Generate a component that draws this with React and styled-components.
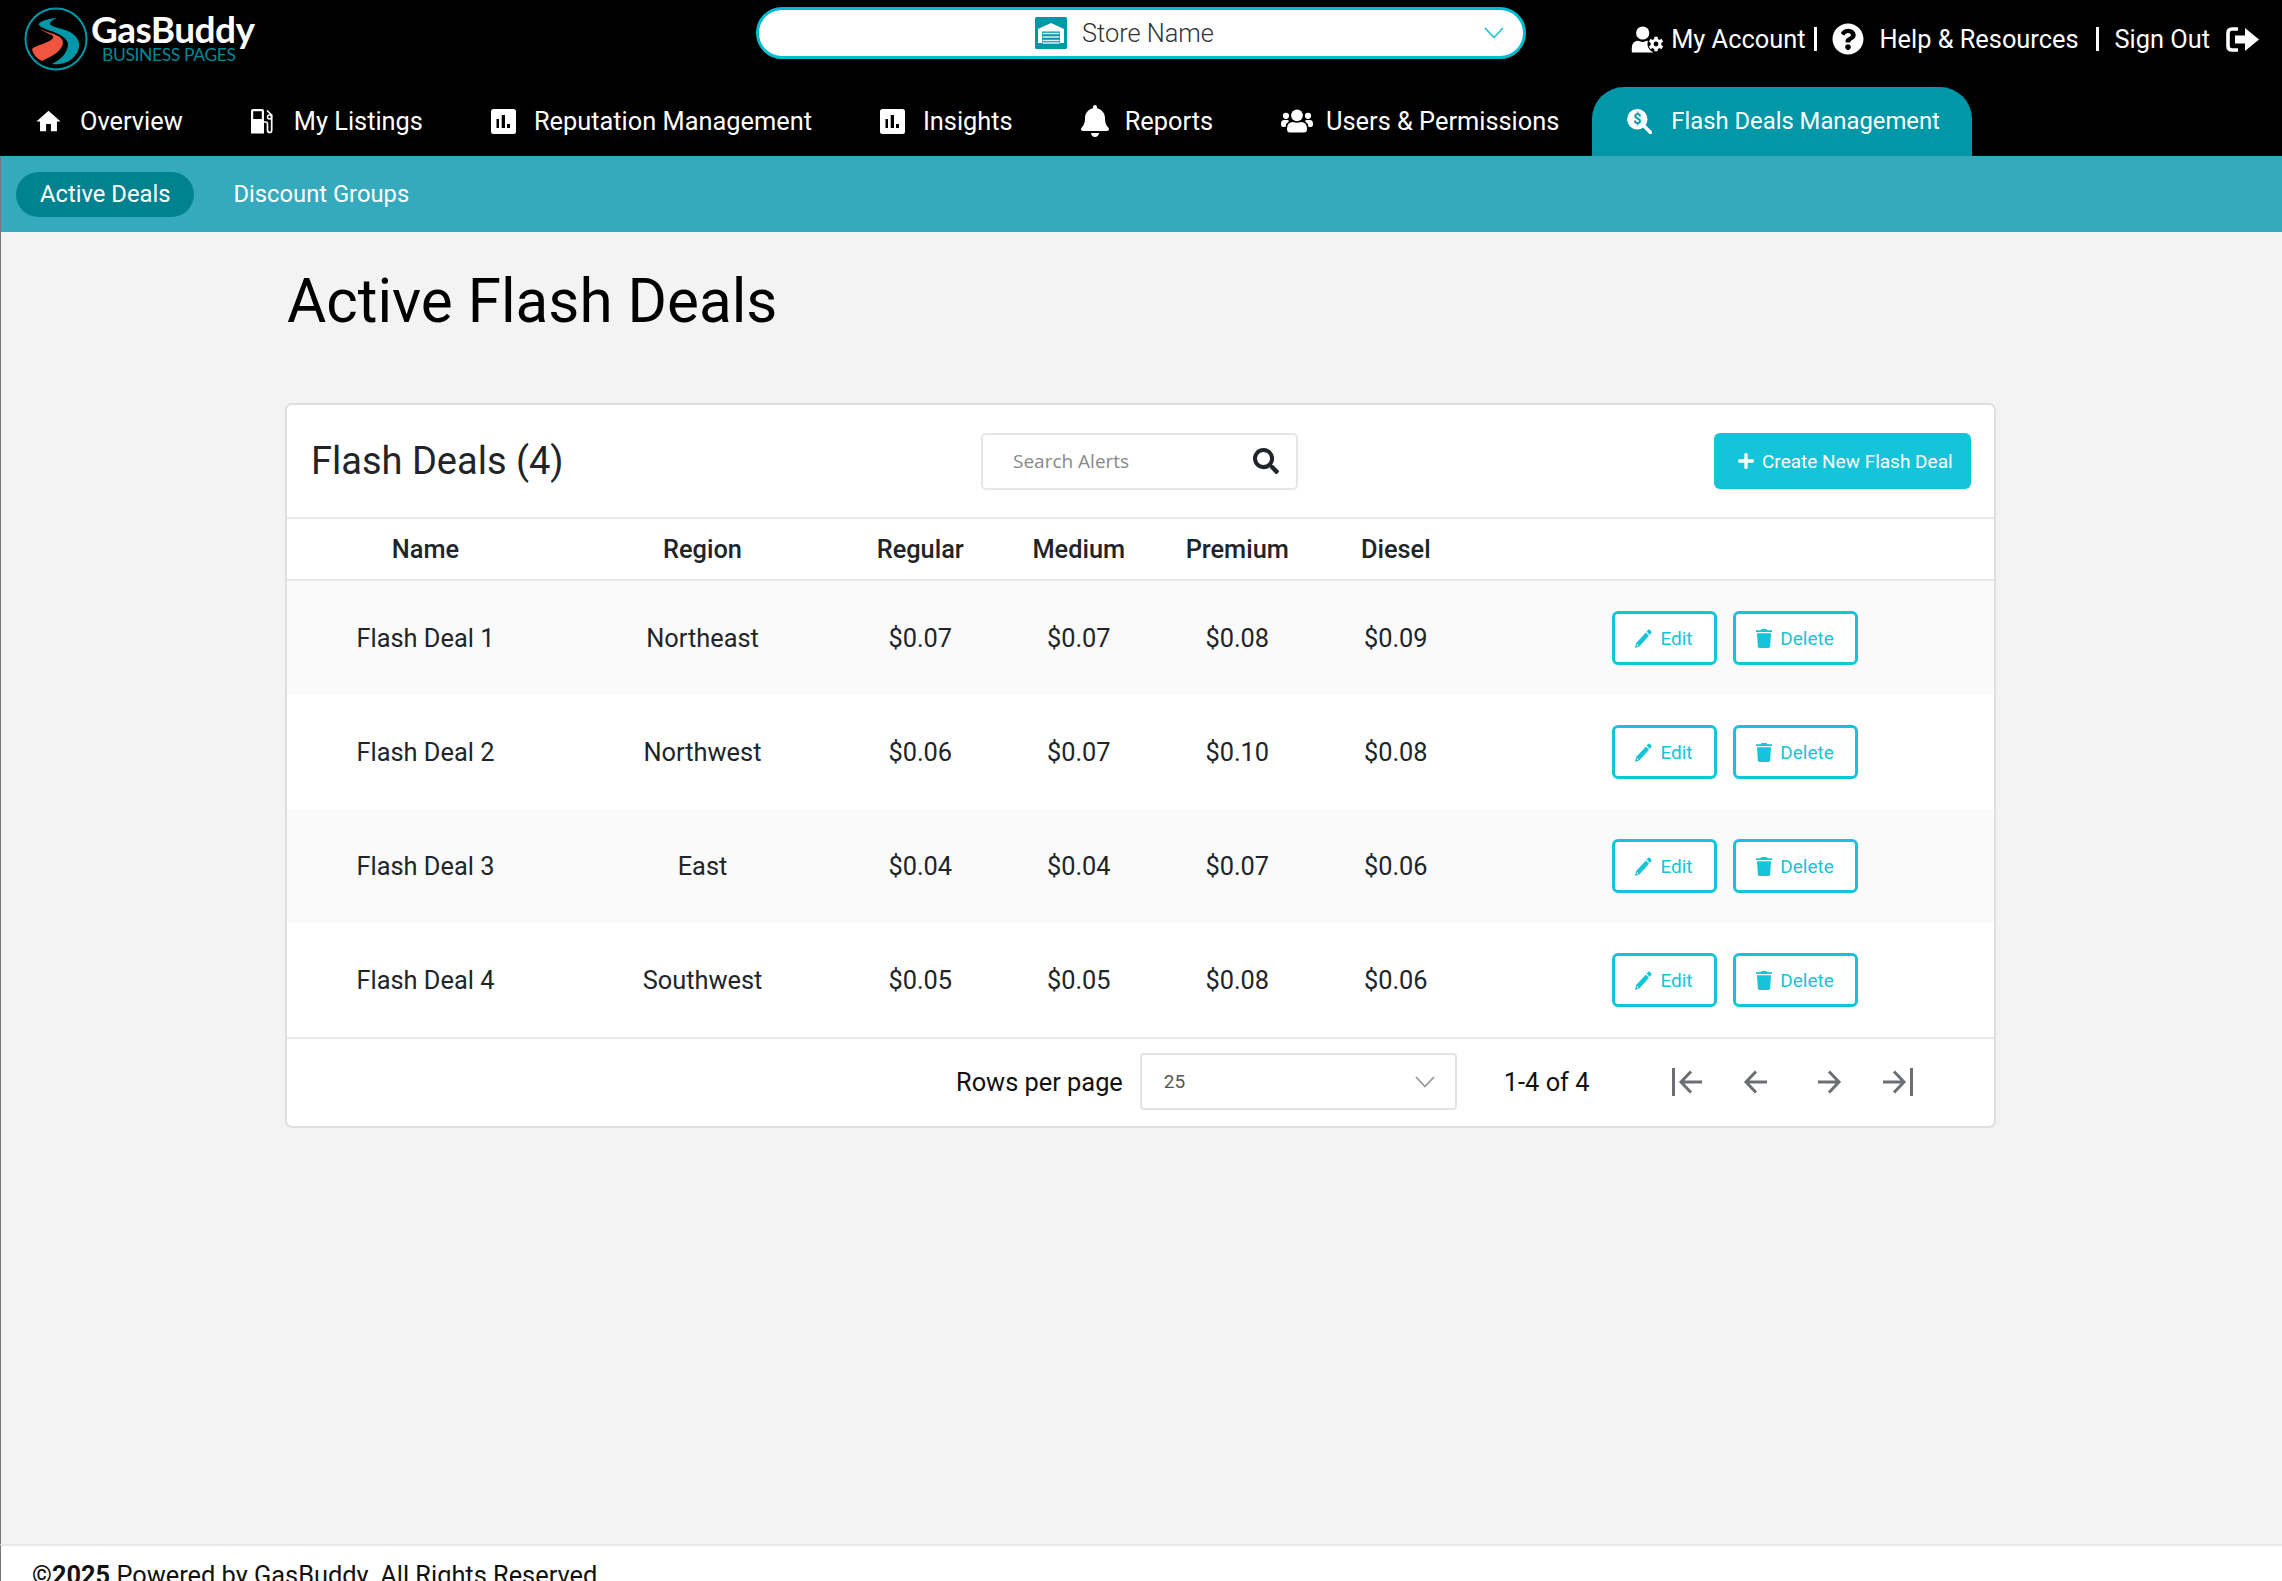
import React from "react";
import styled, { createGlobalStyle } from "styled-components";
import { FaQuestionCircle, FaSearch, FaPlus, FaBell } from "react-icons/fa";
import { MdHome } from "react-icons/md";

const navItems = [
  { label: "Overview", icon: "home", size: 24, gap: 20 },
  { label: "My Listings", icon: "pump", size: 22, gap: 21 },
  { label: "Reputation Management", icon: "chart", size: 25, gap: 18 },
  { label: "Insights", icon: "chart", size: 25, gap: 18 },
  { label: "Reports", icon: "bell", size: 28, gap: 16 },
  { label: "Users & Permissions", icon: "users", size: 32, gap: 13 },
];

const deals = [
  { name: "Flash Deal 1", region: "Northeast", prices: ["$0.07", "$0.07", "$0.08", "$0.09"] },
  { name: "Flash Deal 2", region: "Northwest", prices: ["$0.06", "$0.07", "$0.10", "$0.08"] },
  { name: "Flash Deal 3", region: "East", prices: ["$0.04", "$0.04", "$0.07", "$0.06"] },
  { name: "Flash Deal 4", region: "Southwest", prices: ["$0.05", "$0.05", "$0.08", "$0.06"] },
];

const Logo = () => (
  <svg width="240" height="70" viewBox="0 0 240 70">
    <circle cx="32" cy="34" r="30.5" fill="none" stroke="#0097a9" strokeWidth="2" />
    <path
      d="M33 13 C18 14 12 19 16 21 C22 26 42 28 44 39 C44 48 36 55 28 59 C36 60 44 58 50 52 C58 43 57 33 46 27 C36 22 15 21 33 13 Z"
      fill="#0097a9"
    />
    <path
      d="M13 22 C21 29 31 29 29 33 C26 38 12 40 8 44 C9 49 13 54 18 56 C29 51 39 45 39 37 C38 28 19 28 13 22 Z"
      fill="#f0553f"
    />
    <text x="67" y="38" fill="#fff" fontFamily="Lato" fontWeight="700" fontSize="37" textLength="164">
      GasBuddy
    </text>
    <text x="78" y="56" fill="#008796" fontFamily="Lato" fontSize="17.5" textLength="134">
      BUSINESS PAGES
    </text>
  </svg>
);

const PumpIcon = () => (
  <svg width="22" height="25" viewBox="0 0 22 25" fill="none">
    <path fillRule="evenodd" d="M2 0H11Q13 0 13 2V24.5H0V2Q0 0 2 0ZM2.2 2.2V10H10.8V2.2Z" fill="#fff" />
    <path d="M13 13H15Q16.5 13 16.5 15V21Q16.5 23.5 18.5 23.5Q20.7 23.5 20.7 21V6L16 1.5" stroke="#fff" strokeWidth="1.7" />
    <circle cx="18.5" cy="8" r="2" stroke="#fff" strokeWidth="1.5" />
  </svg>
);

const ChartIcon = () => (
  <svg width="25" height="25" viewBox="0 0 25 25">
    <rect width="25" height="25" rx="2.5" fill="#fff" />
    <path d="M5.5 10H8V19H5.5ZM10.7 6H14V19H10.7ZM16 15H19V19H16Z" fill="#000" />
  </svg>
);

const UsersIcon = () => (
  <svg width="32" height="24" viewBox="0 0 32 24" fill="#fff">
    <circle cx="16" cy="6.3" r="5.9" />
    <circle cx="5" cy="6.8" r="3.1" />
    <circle cx="27" cy="6.8" r="3.1" />
    <path d="M6 20Q6 13 12 13Q16 14.500 20 13Q26 13 26 20Q26 23.500 23 23.500H9Q6 23.500 6 20Z" />
    <path d="M0 15Q0 11 3 11H6.500Q8 11.500 8 12.200Q5 14 4.500 18H2Q0 18 0 15ZM32 15Q32 11 29 11H25.500Q24 11.500 24 12.200Q27 14 27.500 18H30Q32 18 32 15Z" />
  </svg>
);

const UserGearIcon = () => (
  <svg width="33" height="27" viewBox="0 0 33 27">
    <circle cx="11.7" cy="7" r="6.6" fill="#fff" />
    <path d="M.8 26.500V22Q1 15 7 14.800Q12 17 16 14.800L22 16V26.500Z" fill="#fff" />
    <circle cx="25" cy="18" r="8.600" fill="#000" />
    <circle cx="25" cy="18" r="3.900" fill="none" stroke="#fff" strokeWidth="3" />
    <path
      d="M25 13.500V10.700M25 22.500V25.300M21.100 15.700L18.700 14.300M28.900 20.300L31.300 21.700M28.900 15.700L31.300 14.300M21.100 20.300L18.700 21.700"
      stroke="#fff"
      strokeWidth="3.400"
    />
  </svg>
);

const DollarSearchIcon = () => (
  <svg width="25" height="25" viewBox="0 0 25 25">
    <path d="M15 15L23.500 23.500" stroke="#fff" strokeWidth="3.400" strokeLinecap="round" />
    <circle cx="10.300" cy="10.300" r="10.200" fill="#fff" />
    <text x="10.300" y="15.300" textAnchor="middle" fill="#0097a9" fontSize="14" fontWeight="700">
      $
    </text>
  </svg>
);

const StoreIcon = () => (
  <svg width="32" height="32" viewBox="0 0 32 32">
    <rect width="32" height="32" rx="1.5" fill="#0097a9" />
    <path d="M3 26V12L16 6L29 12V26H25V14.5H7V26Z" fill="#fff" />
    <path d="M7.5 16.5H24.5M7.5 20H24.5M7.5 23.5H24.5M7.5 26H24.5" stroke="#d5eff2" strokeWidth="1.7" />
  </svg>
);

const SignOutIcon = () => (
  <svg width="33" height="25" viewBox="0 0 33 25">
    <path d="M12 2H6Q2 2 2 6V19Q2 23 6 23H12" fill="none" stroke="#fff" strokeWidth="3.6" />
    <path d="M9 8.5H19V1L33 12.5L19 24V16.5H9Z" fill="#fff" />
  </svg>
);

const Chevron = ({ color }) => (
  <svg width="20" height="12" viewBox="0 0 20 12">
    <path d="M1 1L10 10.5L19 1" fill="none" stroke={color} strokeWidth="1.8" />
  </svg>
);

const PencilIcon = () => (
  <svg width="17" height="19" viewBox="0 0 17 19" fill="#14c4d8">
    <path d="M11.7 2.5L13.3 .8Q14.2 0 15.1 1L16.3 2.4Q17 3.3 16.2 4.2L14.7 5.9Z" />
    <path fillRule="evenodd" d="M10.9 3.4L14 6.8L4.6 17.2L0 19L1.2 13.9ZM2.2 14.9L1.8 17L3.6 16.3Z" />
  </svg>
);

const TrashIcon = () => (
  <svg width="16" height="19" viewBox="0 0 16 19" fill="#14c4d8">
    <path d="M0 1.3H4.5L5.5 0H10.5L11.5 1.3H16V3H0Z" />
    <path d="M1 4.2H15L14.2 17.2Q14 19 12.5 19H3.5Q2 19 1.8 17.2Z" />
  </svg>
);

const PageArrow = ({ right, bar }) => (
  <ArrowSvg
    width={bar ? 30 : 35}
    height="28"
    viewBox={bar ? "0 0 30 28" : "2 0 35 28"}
    $flip={right}
  >
    <path d="M30 14H9.5M19 3.5L9 14L19 24.5" />
    {bar && <path d="M1.5 0V28" />}
  </ArrowSvg>
);

const icons = {
  home: <MdHome size={29} />,
  pump: <PumpIcon />,
  chart: <ChartIcon />,
  bell: <FaBell size={32} />,
  users: <UsersIcon />,
};

export default function App() {
  return (
    <Page>
      <GlobalStyle />
      <Header>
        <TopBar>
          <Logo />
          <StoreSelect>
            <StoreIcon />
            <StoreName>Store Name</StoreName>
            <Chevron color="#26c6da" />
          </StoreSelect>
          <AccountLinks>
            <UserGearIcon />
            <AccountText $left={7} $right={9}>My Account</AccountText>
            <Divider />
            <HelpIcon size={32} />
            <AccountText $left={15} $right={17}>Help &amp; Resources</AccountText>
            <Divider />
            <AccountText $left={16} $right={16}>Sign Out</AccountText>
            <SignOutIcon />
          </AccountLinks>
        </TopBar>
        <Nav>
          {navItems.map((item) => (
            <NavItem key={item.label} $gap={item.gap}>
              <NavIcon $size={item.size}>{icons[item.icon]}</NavIcon>
              {item.label}
            </NavItem>
          ))}
          <NavTab>
            <DollarSearchIcon />
            Flash Deals Management
          </NavTab>
        </Nav>
      </Header>
      <SubNav>
        <SubLink $active>Active Deals</SubLink>
        <SubLink>Discount Groups</SubLink>
      </SubNav>

      <Main>
        <Title>Active Flash Deals</Title>
        <Card>
          <CardHeader>
            <CardTitle>Flash Deals (4)</CardTitle>
            <Search>
              Search Alerts
              <FaSearch size={26} color="#212529" />
            </Search>
            <CreateButton>
              <FaPlus size={18} />
              Create New Flash Deal
            </CreateButton>
          </CardHeader>
          <HeadRow>
            <span>Name</span>
            <span>Region</span>
            <span>Regular</span>
            <span>Medium</span>
            <span>Premium</span>
            <span>Diesel</span>
          </HeadRow>
          {deals.map((deal) => (
            <Row key={deal.name}>
              <span>{deal.name}</span>
              <span>{deal.region}</span>
              {deal.prices.map((price, i) => (
                <span key={i}>{price}</span>
              ))}
              <Actions>
                <ActionButton $width={105}>
                  <PencilIcon />
                  Edit
                </ActionButton>
                <ActionButton $width={125}>
                  <TrashIcon />
                  Delete
                </ActionButton>
              </Actions>
            </Row>
          ))}
          <CardFooter>
            <span>Rows per page</span>
            <PageSize>
              25
              <Chevron color="#999" />
            </PageSize>
            <Range>1-4 of 4</Range>
            <Pager>
              <PageArrow bar />
              <PageArrow />
              <PageArrow right />
              <PageArrow right bar />
            </Pager>
          </CardFooter>
        </Card>
      </Main>

      <Footer>
        <p>
          <strong>©2025</strong> Powered by GasBuddy. All Rights Reserved.
        </p>
      </Footer>
    </Page>
  );
}

const GlobalStyle = createGlobalStyle`
  * {
    box-sizing: border-box;
  }
  body {
    margin: 0;
    font-family: Roboto, "Liberation Sans", sans-serif;
    font-size: 25.36px;
    color: #212529;
    background: #f3f3f3;
  }
  svg {
    display: block;
    flex-shrink: 0;
  }
`;

const Page = styled.div`
  display: flex;
  flex-direction: column;
  height: 1581px;
  overflow: hidden;
`;
const Header = styled.header`
  height: 156px;
  flex-shrink: 0;
  background: #000;
  color: #fff;
`;
const TopBar = styled.div`
  display: flex;
  height: 87px;
  padding: 5px 23px 0 24px;
`;
const StoreSelect = styled.div`
  display: flex;
  align-items: center;
  width: 770px;
  height: 52px;
  margin: 2px 0 0 492px;
  padding: 0 19px 0 276px;
  border: 3px solid #00bcd0;
  border-radius: 26px;
  background: #fff;
`;
const StoreName = styled.span`
  flex: 1;
  margin-left: 15px;
  font-weight: 300;
  color: #333;
`;
const AccountLinks = styled.div`
  display: flex;
  align-items: center;
  height: 68px;
  margin-left: auto;
`;
const AccountText = styled.span`
  margin: 0 ${({ $right }) => $right}px 0 ${({ $left }) => $left}px;
  white-space: nowrap;
`;
const Divider = styled.i`
  width: 3px;
  height: 24px;
  background: #fff;
`;
const HelpIcon = styled(FaQuestionCircle)`
  margin-left: 15px;
`;
const Nav = styled.nav`
  display: flex;
  height: 69px;
  padding-left: 36px;
`;
const NavItem = styled.a`
  display: flex;
  align-items: center;
  gap: ${({ $gap }) => $gap}px;
  margin-right: 68px;
  padding-bottom: 1px;
  white-space: nowrap;
`;
const NavIcon = styled.span`
  display: flex;
  justify-content: center;
  width: ${({ $size }) => $size}px;
`;
const NavTab = styled.a`
  display: flex;
  align-items: center;
  gap: 19px;
  width: 380px;
  margin-left: -35px;
  padding: 0 0 1px 35px;
  border-radius: 32px 32px 0 0;
  font-size: 23.8px;
  background: #0097a9;
  white-space: nowrap;
`;
const SubNav = styled.div`
  display: flex;
  align-items: center;
  height: 76px;
  flex-shrink: 0;
  padding-left: 15px;
  border-left: 1px solid #777;
  background: #34aabc;
`;
const SubLink = styled.a`
  display: flex;
  align-items: center;
  height: 45px;
  padding: 0 24px;
  margin-right: 15px;
  border-radius: 23px;
  font-size: 23.75px;
  color: #fff;
  background: ${({ $active }) => ($active ? "#00838f" : "transparent")};
`;
const Main = styled.main`
  flex: 1;
  padding: 34px 0 0 285px;
  border-left: 1px solid #777;
  background: #f3f3f3;
`;
const Title = styled.h1`
  margin: 0 0 65px 1px;
  font-size: 60.2px;
  line-height: 72px;
  font-weight: 400;
  color: #000;
`;
const Card = styled.section`
  width: 1711px;
  margin-left: -1px;
  border: 2px solid #dedfe0;
  border-radius: 7px;
  background: #fff;
  overflow: hidden;
`;
const CardHeader = styled.div`
  display: flex;
  align-items: center;
  height: 114px;
  padding: 0 23px 0 24px;
  border-bottom: 2px solid #e8e8e8;
`;
const CardTitle = styled.h2`
  width: 670px;
  margin: 0;
  font-size: 38px;
  font-weight: 400;
`;
const Search = styled.div`
  display: flex;
  align-items: center;
  justify-content: space-between;
  width: 317px;
  height: 57px;
  padding: 0 17px 0 30px;
  border: 2px solid #e6e6e6;
  border-radius: 5px;
  font-family: "Open Sans", sans-serif;
  font-size: 19px;
  color: #888;
`;
const CreateButton = styled.button`
  display: flex;
  align-items: center;
  gap: 7px;
  width: 257px;
  height: 56px;
  margin-left: auto;
  padding: 0 0 0 23px;
  border: 0;
  border-radius: 6px;
  font: 400 19px Roboto, sans-serif;
  white-space: nowrap;
  color: #fff;
  background: #14c4d8;
`;
const HeadRow = styled.div`
  display: grid;
  grid-template-columns: 277px 277px repeat(4, 158.5px) 1fr;
  align-items: center;
  height: 62px;
  border-bottom: 2px solid #e8e8e8;
  font-weight: 500;
  text-align: center;
`;
const Row = styled(HeadRow)`
  height: 114px;
  border: 0;
  font-weight: 400;
  &:nth-child(odd) {
    background: #fafafa;
  }
`;
const Actions = styled.div`
  display: flex;
  justify-content: center;
  gap: 16px;
`;
const ActionButton = styled.button`
  display: flex;
  align-items: center;
  justify-content: center;
  gap: 8px;
  width: ${({ $width }) => $width}px;
  height: 54px;
  padding: 0;
  border: 3px solid #14c4d8;
  border-radius: 6px;
  font: 400 19px Roboto, sans-serif;
  color: #14c4d8;
  background: #fff;
`;
const CardFooter = styled.div`
  display: flex;
  align-items: center;
  height: 89px;
  padding: 0 0 2px 669px;
  border-top: 2px solid #e8e8e8;
  color: #111;
`;
const PageSize = styled.div`
  display: flex;
  align-items: center;
  justify-content: space-between;
  width: 317px;
  height: 57px;
  margin-left: 17px;
  padding: 0 20px 0 22px;
  border: 2px solid #e3e3e3;
  border-radius: 4px;
  font-size: 19px;
  color: #555;
`;
const Range = styled.span`
  margin-left: 47px;
`;
const Pager = styled.div`
  display: flex;
  align-items: center;
  margin-left: 83px;
  gap: 37px;
`;
const ArrowSvg = styled.svg`
  fill: none;
  stroke: #6b6f73;
  stroke-width: 3px;
  transform: ${({ $flip }) => ($flip ? "scaleX(-1)" : "none")};
`;
const Footer = styled.footer`
  height: 37px;
  flex-shrink: 0;
  padding-left: 31px;
  border-left: 1px solid #777;
  border-top: 2px solid #e8e8e8;
  background: #fff;
  color: #111;
  p {
    margin: 0;
    padding-top: 14px;
  }
`;
